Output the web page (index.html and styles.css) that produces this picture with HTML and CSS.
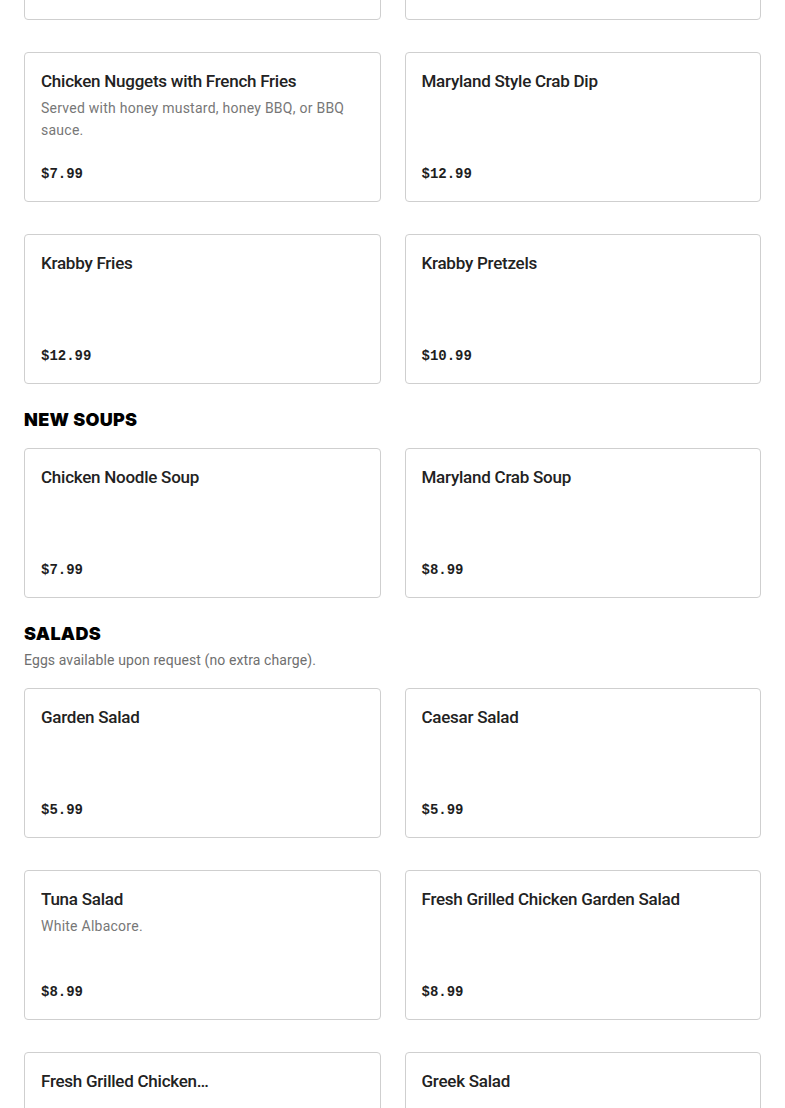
FILE: index.html
```html
<!DOCTYPE html>
<html lang="en">
<head>
<meta charset="utf-8">
<title>Menu</title>
<link rel="stylesheet" href="styles.css">
</head>
<body>
<main class="menu">
  <section class="section">
    <div class="grid">
      <div class="card"><div class="card-body"><h3 class="item-title">Mozzarella Sticks</h3></div><div class="price">$8.99</div></div>
      <div class="card"><div class="card-body"><h3 class="item-title">Onion Rings</h3></div><div class="price">$6.99</div></div>
      <div class="card"><div class="card-body"><h3 class="item-title">Chicken Nuggets with French Fries</h3><p class="item-desc">Served with honey mustard, honey BBQ, or BBQ sauce.</p></div><div class="price">$7.99</div></div>
      <div class="card"><div class="card-body"><h3 class="item-title">Maryland Style Crab Dip</h3></div><div class="price">$12.99</div></div>
      <div class="card"><div class="card-body"><h3 class="item-title">Krabby Fries</h3></div><div class="price">$12.99</div></div>
      <div class="card"><div class="card-body"><h3 class="item-title">Krabby Pretzels</h3></div><div class="price">$10.99</div></div>
    </div>
  </section>

  <section class="section">
    <h2 class="section-title">NEW SOUPS</h2>
    <div class="grid">
      <div class="card"><div class="card-body"><h3 class="item-title">Chicken Noodle Soup</h3></div><div class="price">$7.99</div></div>
      <div class="card"><div class="card-body"><h3 class="item-title">Maryland Crab Soup</h3></div><div class="price">$8.99</div></div>
    </div>
  </section>

  <section class="section">
    <h2 class="section-title">SALADS</h2>
    <p class="section-desc">Eggs available upon request (no extra charge).</p>
    <div class="grid">
      <div class="card"><div class="card-body"><h3 class="item-title">Garden Salad</h3></div><div class="price">$5.99</div></div>
      <div class="card"><div class="card-body"><h3 class="item-title">Caesar Salad</h3></div><div class="price">$5.99</div></div>
      <div class="card"><div class="card-body"><h3 class="item-title">Tuna Salad</h3><p class="item-desc">White Albacore.</p></div><div class="price">$8.99</div></div>
      <div class="card"><div class="card-body"><h3 class="item-title">Fresh Grilled Chicken Garden Salad</h3></div><div class="price">$8.99</div></div>
      <div class="card"><div class="card-body"><h3 class="item-title">Fresh Grilled Chicken…</h3></div><div class="price">$9.99</div></div>
      <div class="card"><div class="card-body"><h3 class="item-title">Greek Salad</h3></div><div class="price">$7.99</div></div>
    </div>
  </section>
</main>
</body>
</html>
```

FILE: styles.css
```css
* { box-sizing: border-box; }

html, body {
  margin: 0;
  padding: 0;
  background: #ffffff;
}

body {
  font-family: Roboto, "Liberation Sans", Arial, sans-serif;
  color: #222222;
  overflow: hidden;
}

.menu {
  padding: 0 24px;
  margin-top: -130px;
  display: flex;
  flex-direction: column;
  gap: 24px;
}

.section {
  display: flex;
  flex-direction: column;
}

.section-title {
  margin: 0;
  font-family: Inter, "Liberation Sans", sans-serif;
  font-weight: 900;
  font-size: 18px;
  line-height: 24px;
  color: #000000;
  letter-spacing: 0.3px;
}

.section-desc {
  margin: 3px 0 0;
  font-size: 14px;
  line-height: 22px;
  color: #6f6f6f;
  letter-spacing: 0.1px;
}

.section-title + .grid {
  margin-top: 16px;
}

.section-desc + .grid {
  margin-top: 17px;
}

.grid {
  display: grid;
  grid-template-columns: 1fr 1fr;
  column-gap: 24px;
  row-gap: 32px;
}

.card {
  height: 150px;
  border: 1px solid #cfcfcf;
  border-radius: 4px;
  padding: 16px 16px 15px;
  display: flex;
  flex-direction: column;
  justify-content: space-between;
  background: #ffffff;
}

.item-title {
  margin: 0;
  font-size: 17px;
  font-weight: 500;
  line-height: 24px;
  color: #222222;
  letter-spacing: -0.25px;
  white-space: nowrap;
  overflow: hidden;
  text-overflow: ellipsis;
}

.item-desc {
  margin: 4px 0 0;
  font-size: 14px;
  line-height: 22px;
  color: #777777;
  letter-spacing: 0.25px;
}

.price {
  font-family: "Liberation Mono", "DejaVu Sans Mono", monospace;
  font-weight: 700;
  font-size: 14px;
  line-height: 24px;
  color: #1e1e1e;
}
```
